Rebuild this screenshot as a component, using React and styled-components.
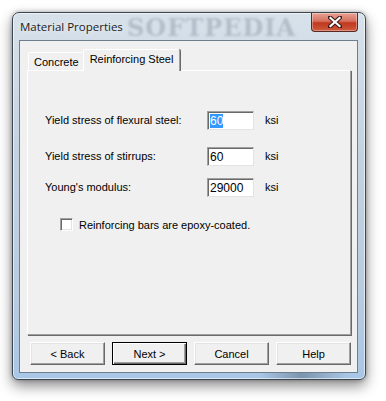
import React from 'react';
import styled, { createGlobalStyle } from 'styled-components';

const GlobalStyle = createGlobalStyle`
  html, body {
    margin: 0;
    padding: 0;
    background: #ffffff;
  }
  body {
    font-family: "Liberation Sans", Arial, sans-serif;
  }
`;

const Page = styled.div`
  width: 386px;
  height: 401px;
  padding: 12px 0 0 12px;
  box-sizing: border-box;
  overflow: hidden;
`;

const Window = styled.div`
  position: relative;
  width: 354px;
  height: 368px;
  box-sizing: border-box;
  display: flex;
  flex-direction: column;
  border: 1px solid #3c4650;
  border-radius: 7px 7px 6px 6px;
  background:
    linear-gradient(90deg, rgba(255,255,255,0) 70%, rgba(40,55,70,0.35) 82%, rgba(255,255,255,0) 95%) bottom / 100% 8px no-repeat,
    linear-gradient(180deg, #d7e1ea 0%, #c3d2e0 40%, #b7cbe0 80%, #a8c6e6 100%);
  box-shadow: 0 6px 14px rgba(0, 0, 0, 0.45), 0 0 4px rgba(0, 0, 0, 0.3), inset 0 0 0 1px rgba(255,255,255,0.6);
  padding: 0 7px 6px 6px;
`;

const TitleBar = styled.div`
  position: relative;
  height: 27px;
  display: flex;
  align-items: center;
  padding-left: 1px;
`;

const Title = styled.span`
  position: relative;
  z-index: 1;
  font-family: "Open Sans", "Liberation Sans", sans-serif;
  font-size: 11.5px;
  color: #1b1b1b;
  text-shadow: 0 0 6px rgba(255, 255, 255, 0.9);
`;

const Watermark = styled.span`
  position: absolute;
  left: ${p => p.$x}px;
  top: ${p => p.$y}px;
  font-family: "DejaVu Serif", "Liberation Serif", serif;
  font-weight: bold;
  font-size: ${p => p.$size}px;
  letter-spacing: 1px;
  color: ${p => p.$color};
  filter: blur(1px);
  pointer-events: none;
  white-space: nowrap;
`;

const CloseButton = styled.div`
  position: absolute;
  right: 0;
  top: 0;
  width: 47px;
  height: 19px;
  box-sizing: border-box;
  border: 1px solid #5a2a22;
  border-top: none;
  border-radius: 0 0 4px 4px;
  background: linear-gradient(180deg, #e8a496 0%, #d6715e 45%, #c0381f 55%, #cf5a3e 100%);
  box-shadow: inset 0 0 0 1px rgba(255, 255, 255, 0.35);
  display: flex;
  align-items: center;
  justify-content: center;
`;

const Client = styled.div`
  flex: 1;
  display: flex;
  flex-direction: column;
  background: #f0f0f0;
  border: 1px solid #6f7e8c;
  padding: 8px 6px 7px 7px;
`;

const TabStrip = styled.div`
  display: flex;
  align-items: flex-end;
  height: 21px;
  padding-left: 1px;
  position: relative;
  z-index: 1;
`;

const Tab = styled.div`
  box-sizing: border-box;
  font-size: 11px;
  color: #000;
  background: #f0f0f0;
  border-top: 1px solid #ffffff;
  border-left: 1px solid #ffffff;
  border-right: 1px solid #a0a0a0;
  box-shadow: 1px 0 0 #696969;
  border-radius: 2px 2px 0 0;
  display: flex;
  align-items: center;
  height: ${p => (p.$active ? 22 : 18)}px;
  padding: ${p => (p.$active ? '0 6px 3px 6px' : '1px 4px 0 5px')};
  margin-bottom: ${p => (p.$active ? -1 : 0)}px;
  margin-left: ${p => (p.$active ? -1 : 0)}px;
  position: relative;
  z-index: ${p => (p.$active ? 2 : 1)};
`;

const Panel = styled.div`
  flex: 1;
  box-sizing: border-box;
  background: #f0f0f0;
  border-top: 1px solid #ffffff;
  border-left: 1px solid #ffffff;
  border-right: 1px solid #a0a0a0;
  border-bottom: 1px solid #a0a0a0;
  box-shadow: 1px 1px 0 #696969;
  position: relative;
  padding: 40px 0 0 17px;
`;

const Form = styled.div`
  display: grid;
  grid-template-columns: 162px 58px auto;
  align-items: center;
  font-size: 11px;
  color: #000;
`;

const Label = styled.div`
  height: 19px;
  line-height: 19px;
  margin-top: ${p => p.$gap}px;
`;

const Field = styled.div`
  width: 47px;
  height: 19px;
  box-sizing: border-box;
  background: #ffffff;
  border-top: 1px solid #a0a0a0;
  border-left: 1px solid #a0a0a0;
  border-right: 1px solid #e3e3e3;
  border-bottom: 1px solid #e3e3e3;
  box-shadow: inset 1px 1px 0 #696969;
  padding: 2px 0 0 2px;
  font-size: 12px;
  line-height: 14px;
  margin-top: ${p => p.$gap}px;
`;

const Selected = styled.span`
  background: #3399ff;
  color: #ffffff;
`;

const Unit = styled.div`
  height: 19px;
  line-height: 19px;
  margin-top: ${p => p.$gap}px;
`;

const CheckRow = styled.label`
  display: flex;
  align-items: center;
  gap: 6px;
  margin: 21px 0 0 15px;
  font-size: 11px;
  color: #000;
`;

const CheckBox = styled.span`
  width: 13px;
  height: 13px;
  box-sizing: border-box;
  background: #ffffff;
  border-top: 1px solid #a0a0a0;
  border-left: 1px solid #a0a0a0;
  border-right: 1px solid #ffffff;
  border-bottom: 1px solid #ffffff;
  box-shadow: inset 1px 1px 0 #696969, inset -1px -1px 0 #e3e3e3;
`;

const ButtonRow = styled.div`
  display: flex;
  justify-content: flex-end;
  gap: 7px;
  margin-top: 7px;
`;

const Button = styled.div`
  width: 75px;
  height: 23px;
  box-sizing: border-box;
  background: #f0f0f0;
  font-size: 11px;
  color: #000;
  display: flex;
  align-items: center;
  justify-content: center;
  border-top: 1px solid #ffffff;
  border-left: 1px solid #ffffff;
  border-right: 1px solid #696969;
  border-bottom: 1px solid #696969;
  box-shadow: inset -1px -1px 0 #a0a0a0, inset 1px 1px 0 #e3e3e3;
  ${p => p.$default && `
    border-color: #000;
    box-shadow: inset 1px 1px 0 #ffffff, inset -1px -1px 0 #696969, inset -2px -2px 0 #a0a0a0;
  `}
`;

const rows = [
  { label: 'Yield stress of flexural steel:', value: '60', selected: true, gap: 0 },
  { label: 'Yield stress of stirrups:', value: '60', gap: 17 },
  { label: "Young's modulus:", value: '29000', gap: 12 },
];

export default function App() {
  return (
    <Page>
      <GlobalStyle />
      <Window>
        <TitleBar>
          <Watermark $x={108} $y={0} $size={24} $color="rgba(60, 75, 90, 0.22)">SOFTPEDIA</Watermark>
          <Title>Material Properties</Title>
          <CloseButton>
            <svg width="14" height="12" viewBox="0 0 14 12">
              <path
                d="M2 1.5 L12 10.5 M12 1.5 L2 10.5"
                stroke="#3a1a16"
                strokeWidth="4.2"
                strokeLinecap="square"
              />
              <path
                d="M2.5 2 L11.5 10 M11.5 2 L2.5 10"
                stroke="#ffffff"
                strokeWidth="2.2"
                strokeLinecap="square"
              />
            </svg>
          </CloseButton>
        </TitleBar>
        <Client>
          <TabStrip>
            <Tab>Concrete</Tab>
            <Tab $active>Reinforcing Steel</Tab>
          </TabStrip>
          <Panel>
            <Form>
              {rows.map(r => (
                <React.Fragment key={r.label}>
                  <Label $gap={r.gap}>{r.label}</Label>
                  <Field $gap={r.gap}>
                    {r.selected ? <Selected>{r.value}</Selected> : r.value}
                  </Field>
                  <Unit $gap={r.gap}>ksi</Unit>
                </React.Fragment>
              ))}
            </Form>
            <CheckRow>
              <CheckBox />
              Reinforcing bars are epoxy-coated.
            </CheckRow>
          </Panel>
          <ButtonRow>
            <Button>&lt; Back</Button>
            <Button $default>Next &gt;</Button>
            <Button>Cancel</Button>
            <Button>Help</Button>
          </ButtonRow>
        </Client>
      </Window>
    </Page>
  );
}
